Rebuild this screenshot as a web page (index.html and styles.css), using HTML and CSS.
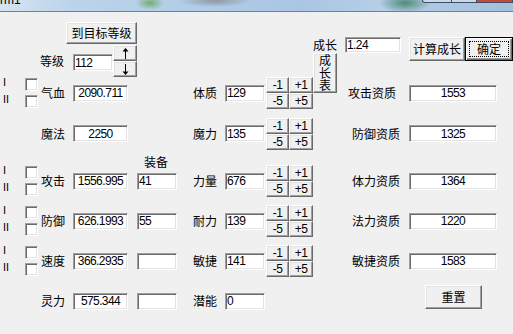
FILE: index.html
```html
<!DOCTYPE html>
<html>
<head>
  <meta charset="utf-8">
  <title>Form1</title>
  <link rel="stylesheet" href="styles.css">
</head>
<body>

  <div class="titlebar">
    <span class="title">rm1</span>
    <div class="caps"><span></span><span></span><span class="close"></span></div>
  </div>

  <div class="form">
    <!-- top: level and growth controls -->
    <button class="btn goto">到目标等级</button>
    <span class="lbl level-lbl">等级</span>
    <input class="tb level-val" value="112" readonly>
    <div class="arrows">
      <button class="btn"><svg width="7" height="11" viewBox="0 0 7 11"><path d="M3.5 0 L6.5 3.5 L0.5 3.5 Z" fill="#000"/><rect x="3" y="3" width="1" height="8" fill="#000"/></svg></button>
      <button class="btn"><svg width="7" height="11" viewBox="0 0 7 11"><path d="M3.5 11 L6.5 7.5 L0.5 7.5 Z" fill="#000"/><rect x="3" y="0" width="1" height="8" fill="#000"/></svg></button>
    </div>
    <span class="lbl growth-lbl">成长</span>
    <input class="tb growth-val" value="1.24" readonly>
    <div class="actions">
      <button class="btn calc">计算成长</button>
      <button class="btn ok"><span>确定</span></button>
    </div>
    <button class="btn table-btn">成<br>长<br>表</button>

    <!-- stat rows -->
    <div class="row r-a">
      <div class="marks c-mk"><span>I</span><input type="checkbox" class="cb"><span>II</span><input type="checkbox" class="cb"></div>
      <span class="lbl c-l1">气血</span>
      <input class="tb c-v1 center" value="2090.711" readonly>
      <span class="lbl c-l3">体质</span>
      <input class="tb c-v3" value="129" readonly>
      <div class="steps c-st"><button class="btn">-1</button><button class="btn">+1</button><button class="btn">-5</button><button class="btn">+5</button></div>
      <span class="lbl c-l4 first">攻击资质</span>
      <input class="tb c-v4 center" value="1553" readonly>
    </div>

    <div class="row r-b">
      <span class="lbl c-l1">魔法</span>
      <input class="tb c-v1 center" value="2250" readonly>
      <span class="lbl c-l3">魔力</span>
      <input class="tb c-v3" value="135" readonly>
      <div class="steps c-st"><button class="btn">-1</button><button class="btn">+1</button><button class="btn">-5</button><button class="btn">+5</button></div>
      <span class="lbl c-l4">防御资质</span>
      <input class="tb c-v4 center" value="1325" readonly>
    </div>

    <div class="row r-eq">
      <span class="lbl c-eq equip-lbl">装备</span>
    </div>

    <div class="row r-c">
      <div class="marks c-mk"><span>I</span><input type="checkbox" class="cb"><span>II</span><input type="checkbox" class="cb"></div>
      <span class="lbl c-l1">攻击</span>
      <input class="tb c-v1 center" value="1556.995" readonly>
      <input class="tb c-eq" value="41" readonly>
      <span class="lbl c-l3">力量</span>
      <input class="tb c-v3" value="676" readonly>
      <div class="steps c-st"><button class="btn">-1</button><button class="btn">+1</button><button class="btn">-5</button><button class="btn">+5</button></div>
      <span class="lbl c-l4">体力资质</span>
      <input class="tb c-v4 center" value="1364" readonly>
    </div>

    <div class="row r-d">
      <div class="marks c-mk"><span>I</span><input type="checkbox" class="cb"><span>II</span><input type="checkbox" class="cb"></div>
      <span class="lbl c-l1">防御</span>
      <input class="tb c-v1 center" value="626.1993" readonly>
      <input class="tb c-eq" value="55" readonly>
      <span class="lbl c-l3">耐力</span>
      <input class="tb c-v3" value="139" readonly>
      <div class="steps c-st"><button class="btn">-1</button><button class="btn">+1</button><button class="btn">-5</button><button class="btn">+5</button></div>
      <span class="lbl c-l4">法力资质</span>
      <input class="tb c-v4 center" value="1220" readonly>
    </div>

    <div class="row r-e">
      <div class="marks c-mk"><span>I</span><input type="checkbox" class="cb"><span>II</span><input type="checkbox" class="cb"></div>
      <span class="lbl c-l1">速度</span>
      <input class="tb c-v1 center" value="366.2935" readonly>
      <input class="tb c-eq" value="" readonly>
      <span class="lbl c-l3">敏捷</span>
      <input class="tb c-v3" value="141" readonly>
      <div class="steps c-st"><button class="btn">-1</button><button class="btn">+1</button><button class="btn">-5</button><button class="btn">+5</button></div>
      <span class="lbl c-l4">敏捷资质</span>
      <input class="tb c-v4 center" value="1583" readonly>
    </div>

    <div class="row r-f">
      <span class="lbl c-l1">灵力</span>
      <input class="tb c-v1 center" value="575.344" readonly>
      <input class="tb c-eq" value="" readonly>
      <span class="lbl c-l3">潜能</span>
      <input class="tb c-v3" value="0" readonly>
      <button class="btn reset c-v4">重置</button>
    </div>
  </div>

</body>
</html>
```

FILE: styles.css
```css
* { box-sizing: border-box; }
body { margin: 0; background: #f0f0f0; overflow: hidden; width: 513px; height: 334px; font-family: "Noto Sans CJK SC", sans-serif; font-size: 12px; color: #000; }

/* window caption, only the bottom strip shows */
.titlebar { display: flex; align-items: flex-start; height: 12px; overflow: hidden; border-bottom: 1px solid #6c8299;
  background: radial-gradient(ellipse 14px 7px at 150px 3px, #74ad6c, transparent), radial-gradient(ellipse 36px 6px at 215px 1px, #8e99a3, transparent), radial-gradient(ellipse 26px 10px at 405px 3px, #4f8b79, transparent), linear-gradient(90deg, #d6e4f2 0, #bcd4eb 70px, #a9c6e3 300px, #b6cee7 380px, #a3c0dd 513px); }
.title { margin-top: -6px; font: 12px/12px "Liberation Sans", sans-serif; }
.caps { margin-left: auto; display: flex; height: 3px; }
.caps span { border: 1px solid #3d4f63; border-top: none; background: #c9d9ea; }
.caps span:nth-child(1) { width: 30px; border-radius: 0 0 0 3px; }
.caps span:nth-child(2) { width: 25px; border-left: none; }
.caps span.close { width: 36px; background: #c8493c; border-left: none; }

.form { display: grid; padding-top: 10px;
  grid-template-columns: 25px 15px 33px 40px 24px 56px 32px 41px 47px 27px 69px 104px;
  grid-template-rows: 15px 8px 8px 8px 12px 40px 41px 7px 40px 40px 40px 40px; }

.lbl { line-height: 16px; white-space: nowrap; }

.tb { height: 17px; padding: 0 1px; background: #fff; border: 1px solid; border-color: #a0a0a0 #fff #fff #a0a0a0; box-shadow: inset 1px 1px #696969, inset -1px -1px #e3e3e3; font: 12px "Liberation Sans", sans-serif; letter-spacing: -0.6px; color: #000; outline: none; }
.tb.center { text-align: center; }

.btn { padding: 0; background: #f0f0f0; border: 1px solid; border-color: #fff #696969 #696969 #fff; box-shadow: inset -1px -1px #a0a0a0, inset 1px 1px #e3e3e3; font: 12px "Noto Sans CJK SC", sans-serif; color: #000; line-height: 14px; }

.cb { appearance: none; margin: 0; width: 13px; height: 13px; background: #fff; border: 1px solid; border-color: #a0a0a0 #fff #fff #a0a0a0; box-shadow: inset 1px 1px #696969, inset -1px -1px #e3e3e3; }

/* top block */
.goto { grid-column: 3 / 6; grid-row: 1 / 3; justify-self: end; align-self: start; width: 71px; height: 22px; }
.level-lbl { grid-column: 3; grid-row: 4 / 6; align-self: start; }
.level-val { grid-column: 4; grid-row: 4 / 6; align-self: start; margin-top: 1px; width: 40px; }
.arrows { grid-column: 5; grid-row: 3 / 7; align-self: start; display: flex; flex-direction: column; }
.arrows .btn { width: 24px; height: 16px; display: flex; align-items: center; justify-content: center; }
.growth-lbl { grid-column: 10; grid-row: 2 / 4; align-self: center; }
.growth-val { grid-column: 11; grid-row: 2 / 4; align-self: start; margin-left: 5px; width: 56px; height: 16px; }
.actions { grid-column: 12; grid-row: 2 / 5; align-self: start; display: flex; }
.calc { width: 64px; height: 24px; }
.ok { width: 48px; height: 24px; flex-shrink: 0; border: 1px solid #000; box-shadow: inset 1px 1px #fff, inset -1px -1px #696969, inset -2px -2px #a0a0a0; }
.ok span { display: block; margin: 3px; height: 16px; border: 1px dotted #000; line-height: 14px; }
.table-btn { grid-column: 10; grid-row: 4 / 7; align-self: start; width: 24px; height: 40px; line-height: 12.5px; }

/* stat rows */
.row { grid-column: 1 / -1; display: grid; grid-template-columns: subgrid; align-items: center; }
.r-a { grid-row: 6; }
.r-b { grid-row: 7; }
.r-eq { grid-row: 8; }
.r-c { grid-row: 9; }
.r-d { grid-row: 10; }
.r-e { grid-row: 11; }
.r-f { grid-row: 12; }

.c-mk { grid-column: 1 / 3; }
.c-l1 { grid-column: 3; margin-left: 1px; }
.c-v1 { grid-column: 4 / 6; width: 55px; }
.c-eq { grid-column: 6; width: 40px; }
.c-l3 { grid-column: 7; }
.c-v3 { grid-column: 8; width: 40px; }
.c-st { grid-column: 9; }
.c-l4 { grid-column: 11; margin-left: 12px; }
.c-l4.first { margin-left: 8px; }
.c-v4 { grid-column: 12; width: 88px; }

.equip-lbl { align-self: end; margin-left: 7px; margin-bottom: -2px; }

.marks { display: grid; grid-template-columns: 25px 13px; grid-template-rows: 13px 13px; row-gap: 4px; }
.marks span { padding-left: 3px; margin-top: -2px; font: 11px/13px "Liberation Sans", sans-serif; }

.steps { display: grid; grid-template-columns: 23px 24px; grid-template-rows: 16px 16px; }
.steps .btn { font: 12px/14px "Liberation Sans", sans-serif; letter-spacing: -0.6px; }

.reset { align-self: start; margin-top: 4px; margin-left: 16px; width: 57px; height: 24px; }
```
